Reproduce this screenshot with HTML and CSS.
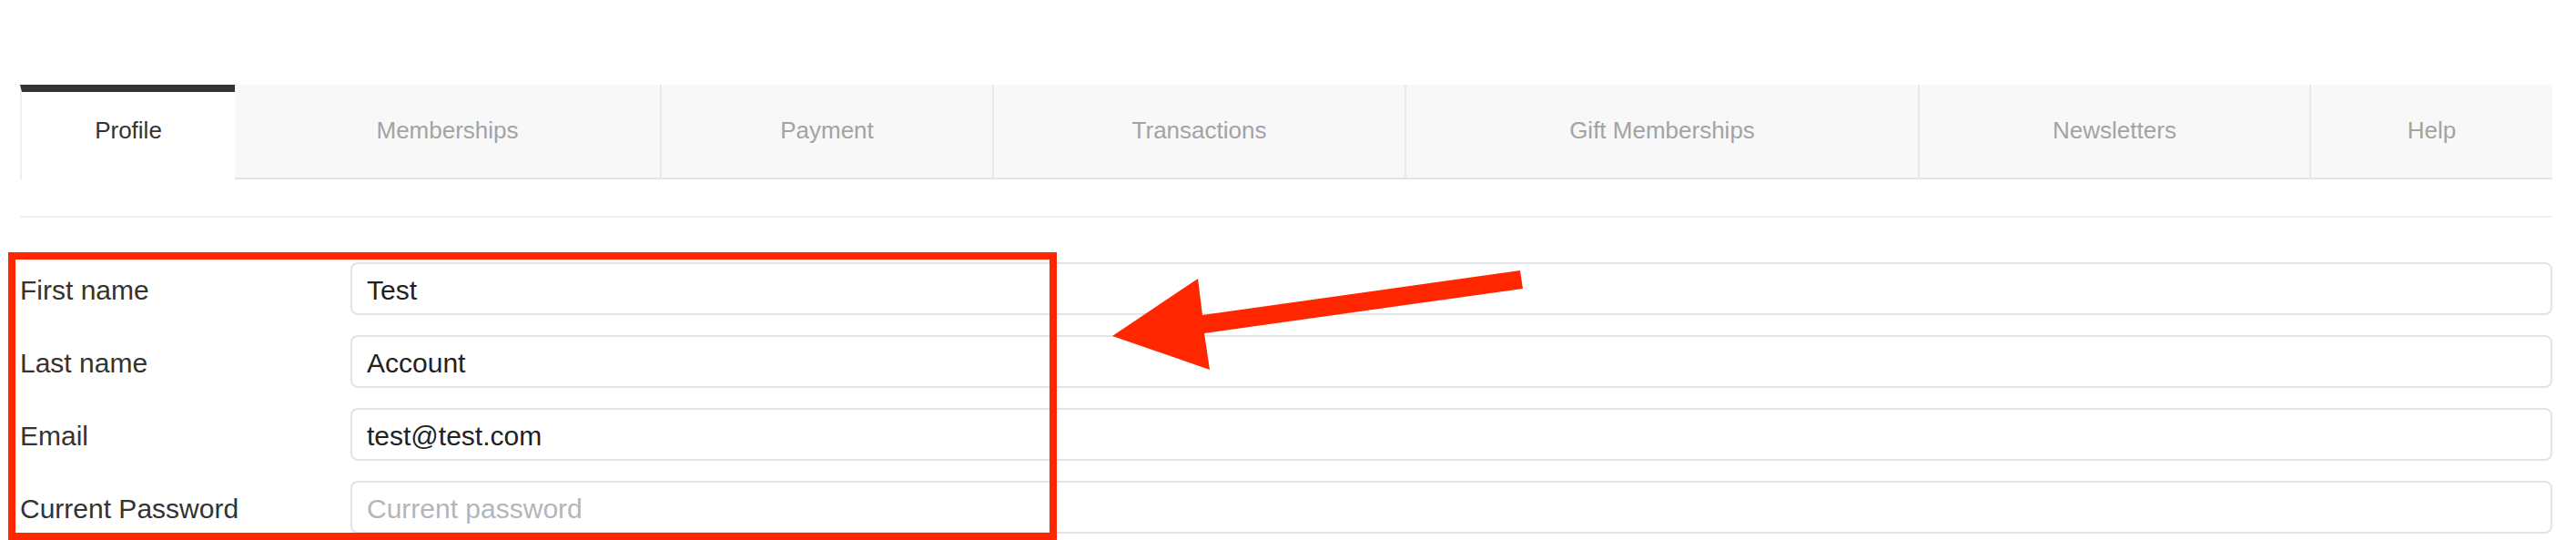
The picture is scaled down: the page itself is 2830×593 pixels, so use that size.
FILE: index.html
```html
<!DOCTYPE html>
<html lang="en">
<head>
<meta charset="utf-8">
<title>Profile</title>
<link rel="stylesheet" href="styles.css">
</head>
<body>
<div class="page">
  <nav class="tabs">
    <a class="tab active">Profile</a>
    <a class="tab">Memberships</a>
    <a class="tab">Payment</a>
    <a class="tab">Transactions</a>
    <a class="tab">Gift Memberships</a>
    <a class="tab">Newsletters</a>
    <a class="tab last">Help</a>
  </nav>
  <hr class="divider">
  <form class="form">
    <div class="row">
      <label class="label">First name</label>
      <input class="field" type="text" value="Test">
    </div>
    <div class="row">
      <label class="label">Last name</label>
      <input class="field" type="text" value="Account">
    </div>
    <div class="row">
      <label class="label">Email</label>
      <input class="field" type="text" value="test@test.com">
    </div>
    <div class="row">
      <label class="label">Current Password</label>
      <input class="field" type="password" placeholder="Current password">
    </div>
  </form>
</div>
<div class="highlight"></div>
<svg class="arrow" width="500" height="140" viewBox="1200 280 500 140" xmlns="http://www.w3.org/2000/svg">
  <polygon fill="#ff2600" points="1670,297 1321,346 1316,306 1222,369 1329,406 1323,366 1673,317"/>
</svg>
</body>
</html>
```

FILE: styles.css
```css
html, body {
  margin: 0;
  padding: 0;
  background: #ffffff;
}

body {
  font-family: "Liberation Sans", Arial, Helvetica, sans-serif;
  overflow: hidden;
}

.page {
  width: 2782px;
  padding: 93px 0 0 22px;
}

.tabs {
  display: grid;
  grid-template-columns: 236px 469px 365px 453px 564px 430px 265px;
}

.tab {
  display: block;
  box-sizing: border-box;
  height: 104px;
  padding-top: 35px;
  font-size: 26px;
  line-height: 30px;
  text-align: center;
  color: #a3a3a3;
  background: #f8f8f8;
  border-bottom: 2px solid #e4e4e4;
  border-right: 2px solid #e8e8e8;
}

.tab.last {
  border-right: none;
}

.tab.active {
  background: #ffffff;
  color: #333333;
  border-top: 8px solid #333333;
  border-left: 2px solid #efefef;
  border-right: none;
  border-bottom: none;
  padding-top: 27px;
}

.divider {
  margin: 40px 0 0 0;
  border: none;
  height: 2px;
  background: #f0f0f0;
}

.form {
  margin-top: 49px;
  display: flex;
  flex-direction: column;
  gap: 22px;
}

.row {
  display: flex;
  align-items: center;
}

.label {
  width: 363px;
  flex: none;
  padding-top: 4px;
  font-size: 30px;
  color: #333333;
}

.field {
  flex: 1;
  box-sizing: border-box;
  height: 58px;
  margin: 0;
  padding: 4px 16px 0 16px;
  border: 2px solid #e1e4e8;
  border-radius: 8px;
  font-family: "Liberation Sans", Arial, Helvetica, sans-serif;
  font-size: 30px;
  color: #222222;
  background: #ffffff;
  outline: none;
}

.field::placeholder {
  color: #b3b6ba;
}

.highlight {
  position: absolute;
  left: 9px;
  top: 277px;
  width: 1152px;
  height: 316px;
  box-sizing: border-box;
  border: 8px solid #ff2600;
}

.arrow {
  position: absolute;
  left: 1200px;
  top: 280px;
}
```
